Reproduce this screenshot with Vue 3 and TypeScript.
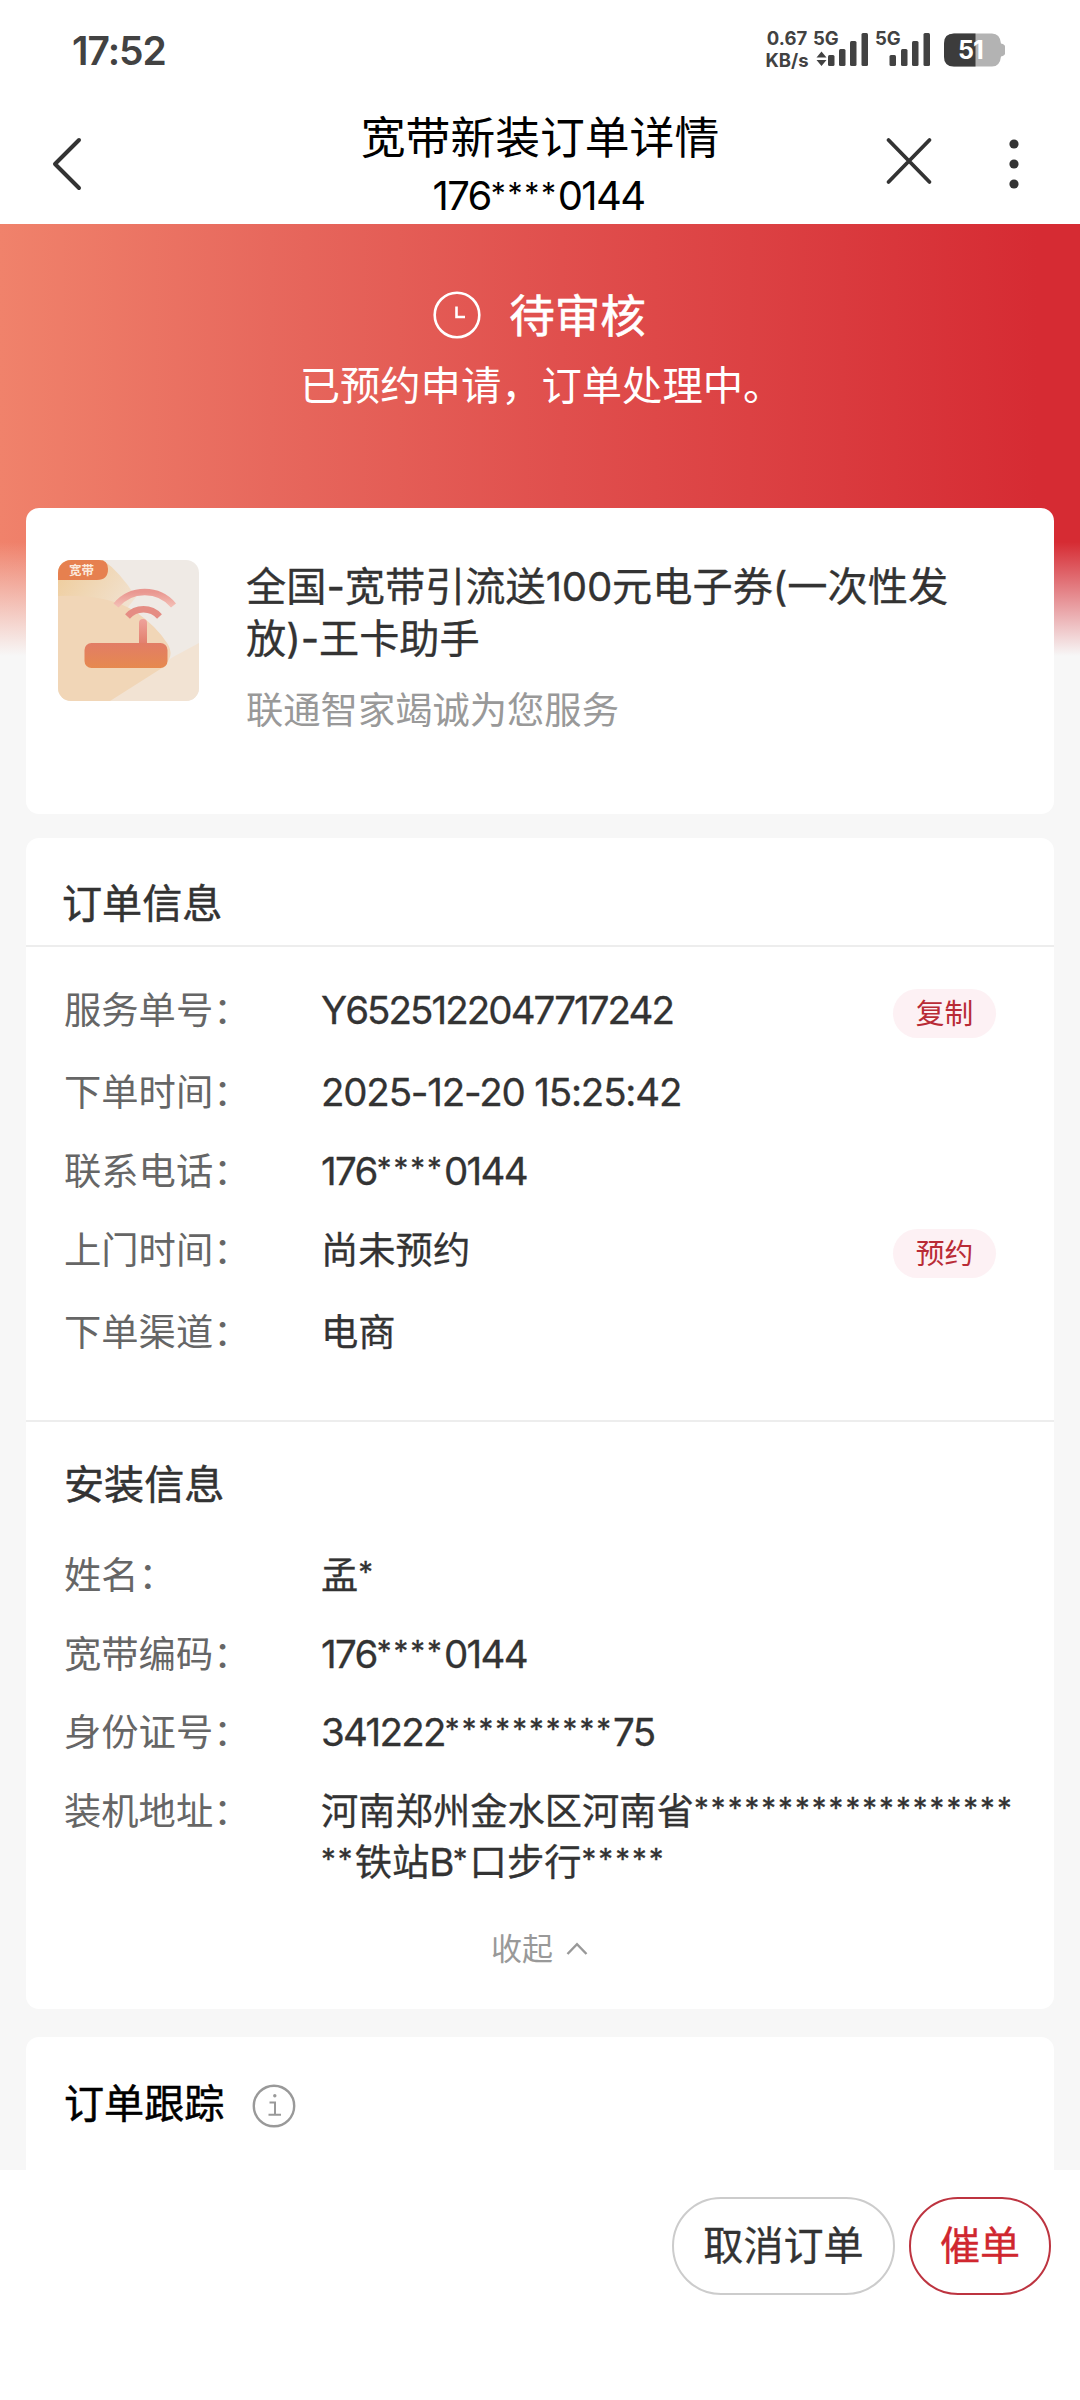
<script setup lang="ts">
interface Segment {
  text: string
  kind: 'latin' | 'stars' | 'han'
}

interface Row {
  label: string
  lines: string[]
  height: number
  tracking?: number
  action?: string
}

// Latin runs, masking asterisks and Chinese runs each get their own size.
function segments(text: string): Segment[] {
  const parts = text.match(/\*+|[\x20-\x29\x2b-\x7e]+|[^\x20-\x7e]+/g) ?? []
  return parts.map((part) => ({
    text: part,
    kind: part.startsWith('*') ? 'stars' : /^[\x20-\x7e]/.test(part) ? 'latin' : 'han',
  }))
}

const stars = (count: number): string => '*'.repeat(count)

const phone = '176****0144'

const orderRows: Row[] = [
  { label: '服务单号：', lines: ['Y6525122047717242'], height: 82, tracking: -1.95, action: '复制' },
  { label: '下单时间：', lines: ['2025-12-20 15:25:42'], height: 79, tracking: -1.2 },
  { label: '联系电话：', lines: [phone], height: 79 },
  { label: '上门时间：', lines: ['尚未预约'], height: 82, action: '预约' },
  { label: '下单渠道：', lines: ['电商'], height: 85 },
]

const installRows: Row[] = [
  { label: '姓名：', lines: ['孟*'], height: 79 },
  { label: '宽带编码：', lines: [phone], height: 78 },
  { label: '身份证号：', lines: [`341222${stars(10)}75`], height: 79 },
  { label: '装机地址：', lines: [`河南郑州金水区河南省${stars(19)}`, `**铁站B*口步行${stars(5)}`], height: 141 },
]

const productTitle = ['全国-宽带引流送100元电子券(一次性发', '放)-王卡助手']
</script>

<template>
  <div class="page">
    <div class="status-bar">
      <span class="clock">17:52</span>
      <div class="indicators">
        <div class="speed"><span>0.67</span><span>KB/s</span></div>
        <svg class="signals" width="118" height="46" viewBox="813 23 118 46">
          <g fill="#424242">
            <text x="813" y="45" class="net">5G</text>
            <path d="M821.5 51.5l5 6h-10zM821.5 66l5-6h-10z" />
            <rect x="828" y="55" width="6.5" height="11" rx="1.5" />
            <rect x="839" y="49" width="6.5" height="17" rx="1.5" />
            <rect x="850" y="41" width="6.5" height="25" rx="1.5" />
            <rect x="861.5" y="33" width="6.5" height="33" rx="1.5" />
            <text x="875" y="45" class="net">5G</text>
            <rect x="889.5" y="55" width="6.5" height="11" rx="1.5" />
            <rect x="901" y="49" width="6.5" height="17" rx="1.5" />
            <rect x="912" y="41" width="6.5" height="25" rx="1.5" />
            <rect x="923.5" y="33" width="6.5" height="33" rx="1.5" />
          </g>
        </svg>
        <svg class="battery" width="62" height="34" viewBox="0 0 62 34">
          <path d="M10 0.5h38q8 0 9 10q4 1 4 3v7q0 2-4 3q-1 10-9 10H10q-10 0-10-10v-13q0-10 10-10z" fill="#b3b3b3" />
          <path d="M10 0.5h21.500v33H10q-10 0-10-10v-13q0-10 10-10z" fill="#3c3c3c" />
          <text x="14" y="26" class="level">51</text>
        </svg>
      </div>
    </div>

    <header class="nav">
      <svg class="nav-back" width="34" height="58" viewBox="0 0 34 58" fill="none" stroke="#333" stroke-width="4" stroke-linecap="round" stroke-linejoin="round">
        <path d="M29 5L5 29L29 53" />
      </svg>
      <div class="nav-title">
        <h1>宽带新装订单详情</h1>
        <p><span v-for="(s, i) in segments(phone)" :key="i" :class="s.kind">{{ s.text }}</span></p>
      </div>
      <div class="nav-actions">
        <svg width="48" height="48" viewBox="0 0 48 48" fill="none" stroke="#333" stroke-width="3.800" stroke-linecap="round">
          <path d="M3.500 3L44.500 45M44.500 3L3.500 45" />
        </svg>
        <svg width="10" height="50" viewBox="0 0 10 50" fill="#333">
          <circle cx="5" cy="5" r="4.600" />
          <circle cx="5" cy="25" r="4.600" />
          <circle cx="5" cy="45" r="4.600" />
        </svg>
      </div>
    </header>

    <main class="content">
      <section class="hero">
        <div class="hero-state">
          <svg width="48" height="48" viewBox="0 0 48 48" fill="none" stroke="#fff" stroke-width="2.600">
            <circle cx="24" cy="24" r="22.300" />
            <path d="M23.500 15.500v10.500h8.500" />
          </svg>
          <h2>待审核</h2>
        </div>
        <p>已预约申请，订单处理中。</p>
      </section>

      <section class="card product">
        <svg class="product-image" width="141" height="141" viewBox="0 0 141 141">
          <defs>
            <clipPath id="tile"><rect width="141" height="141" rx="13" /></clipPath>
            <linearGradient id="base" x1="0" y1="0" x2="0" y2="1">
              <stop offset="0" stop-color="#e27d66" /><stop offset="1" stop-color="#e6894f" />
            </linearGradient>
            <linearGradient id="mast" x1="0" y1="0" x2="0" y2="1">
              <stop offset="0" stop-color="#eea29b" /><stop offset="1" stop-color="#e27f6c" />
            </linearGradient>
            <linearGradient id="wave" x1="0" y1="0" x2="0" y2="1">
              <stop offset="0" stop-color="#e99790" /><stop offset="1" stop-color="#f3bcb3" />
            </linearGradient>
            <linearGradient id="glow" x1="0" y1="0" x2="1" y2="0.600">
              <stop offset="0" stop-color="#efcb98" /><stop offset="1" stop-color="#f1e2d0" />
            </linearGradient>
          </defs>
          <g clip-path="url(#tile)">
            <rect width="141" height="141" fill="#efeae5" />
            <path d="M0 0H45Q62 12 78 37L60 60H0z" fill="url(#glow)" />
            <path d="M115 97L141 83V141H50z" fill="#f2e3d3" />
            <path d="M0 36Q50 34 78 52Q98 66 109 83Q118 96 104 108L52 141H0z" fill="#f1d6b7" />
            <path d="M0 0H41Q50 0 50 9Q50 20 39 20H0z" fill="#e6804f" />
            <text x="11" y="14.500" class="tile-tag">宽带</text>
            <path d="M58 45.500A37.500 37.500 0 0 1 115.500 45.500" fill="none" stroke="url(#wave)" stroke-width="6.500" />
            <path d="M69.500 56.500A21.500 21.500 0 0 1 101.500 56.500" fill="none" stroke="#e58d84" stroke-width="6.500" />
            <path d="M81 84V63Q81 59 85 59Q89 59 89 63V84z" fill="url(#mast)" />
            <rect x="26.500" y="83" width="83" height="25" rx="7" fill="url(#base)" />
          </g>
        </svg>
        <div class="product-text">
          <h3>
            <span v-for="line in productTitle" :key="line" class="line"><span v-for="(s, i) in segments(line)" :key="i" :class="s.kind">{{ s.text }}</span></span>
          </h3>
          <p>联通智家竭诚为您服务</p>
        </div>
      </section>

      <section class="card details">
        <div class="card-head"><h3>订单信息</h3></div>
        <div class="rows order-rows">
          <div v-for="row in orderRows" :key="row.label" class="row" :style="{ height: row.height + 'px' }">
            <span class="label">{{ row.label }}</span>
            <span class="value" :style="{ letterSpacing: (row.tracking ?? -1.7) + 'px' }">
              <span v-for="line in row.lines" :key="line" class="line"><span v-for="(s, i) in segments(line)" :key="i" :class="s.kind">{{ s.text }}</span></span>
            </span>
            <button v-if="row.action" class="pill">{{ row.action }}</button>
          </div>
        </div>
        <div class="install">
          <h3>安装信息</h3>
          <div class="rows">
            <div v-for="row in installRows" :key="row.label" class="row" :style="{ height: row.height + 'px' }">
              <span class="label">{{ row.label }}</span>
              <span class="value" :style="{ letterSpacing: (row.tracking ?? -1.7) + 'px' }">
                <span v-for="line in row.lines" :key="line" class="line"><span v-for="(s, i) in segments(line)" :key="i" :class="s.kind">{{ s.text }}</span></span>
              </span>
            </div>
          </div>
          <div class="collapse">
            <span>收起</span>
            <svg width="22" height="14" viewBox="0 0 22 14" fill="none" stroke="#999" stroke-width="2.400"><path d="M1.500 12L11 2.200L20.500 12" /></svg>
          </div>
        </div>
      </section>

      <section class="card tracking">
        <h3>订单跟踪</h3>
        <svg width="44" height="44" viewBox="0 0 44 44" fill="none" stroke="#999" stroke-width="2.400">
          <circle cx="22" cy="22" r="20.200" />
          <path d="M17.500 18.500h5.500v12M16.500 30.800h12.500" stroke-width="2" />
          <circle cx="22.800" cy="11.800" r="1.700" fill="#999" stroke="none" />
        </svg>
      </section>
    </main>

    <footer class="actions">
      <button class="btn">取消订单</button>
      <button class="btn primary">催单</button>
    </footer>
  </div>
</template>

<style>
body {
  margin: 0;
  background: #fff;
}
</style>

<style scoped>
.page {
  width: 1080px;
  height: 2400px;
  display: flex;
  flex-direction: column;
  overflow: hidden;
  background: #fff;
  color: #333;
  font-family: 'Noto Sans CJK SC', 'Noto Sans', sans-serif;
}

h1,
h2,
h3,
p {
  margin: 0;
  font-weight: 400;
}

button {
  font-family: inherit;
  padding: 0;
  box-sizing: border-box;
}

.latin,
.stars {
  font-family: Inter, sans-serif;
  line-height: 0;
}

.han {
  letter-spacing: 0;
}

.line {
  display: block;
  white-space: pre;
}

.status-bar {
  height: 100px;
  flex: none;
  display: flex;
  justify-content: space-between;
  box-sizing: border-box;
  padding: 0 74px 0 72px;
  color: #424242;
}

.clock {
  font: 600 39px/101px Inter, sans-serif;
  letter-spacing: -1px;
}

.indicators {
  display: flex;
  align-items: flex-start;
}

.speed {
  display: flex;
  flex-direction: column;
  align-items: center;
  width: 46px;
  margin: 27px 3px 0 0;
  font: 700 18.500px/22px Inter, sans-serif;
}

.signals {
  margin-top: 23px;
  overflow: visible;
}

.net {
  font: 700 18.500px Inter, sans-serif;
}

.battery {
  margin: 33px 0 0 13px;
}

.level {
  font: 700 25px Inter, sans-serif;
  letter-spacing: -1px;
  fill: #fff;
}

.nav {
  height: 124px;
  flex: none;
  display: grid;
  grid-template-columns: 300px 480px 300px;
}

.nav-back {
  margin: 35px 0 0 50px;
}

.nav-title {
  text-align: center;
  color: #000;
}

.nav-title h1 {
  font-size: 44.800px;
  line-height: 70px;
}

.nav-title p {
  font-size: 40px;
  line-height: 46px;
  letter-spacing: -1.600px;
  padding-right: 3px;
}

.nav-title .stars {
  font-size: 30px;
  letter-spacing: 1.700px;
  vertical-align: 6px;
}

.nav-actions {
  display: flex;
  justify-content: flex-end;
  gap: 76px;
  padding: 37px 61px 0 0;
}

.nav-actions svg:last-child {
  margin-top: 2px;
}

.content {
  height: 1946px;
  flex: none;
  overflow: hidden;
  display: flex;
  flex-direction: column;
  padding: 0 26px;
  background:
    linear-gradient(to bottom, rgba(247, 247, 247, 0) 318px, #f7f7f7 432px),
    linear-gradient(to right, #f0826b 0%, #e7685d 25%, #e04f4d 52%, #da3a3e 78%, #d62b33 96%);
}

.hero {
  height: 284px;
  flex: none;
  color: #fff;
  display: flex;
  flex-direction: column;
  align-items: center;
}

.hero-state {
  display: flex;
  align-items: center;
  gap: 28px;
  height: 66px;
  margin-top: 58px;
  padding-right: 1px;
}

.hero-state h2 {
  font-size: 45.500px;
  line-height: 60px;
  padding-bottom: 4px;
  -webkit-text-stroke: 0.6px currentColor;
}

.hero p {
  font-size: 40.300px;
  line-height: 70px;
  padding-left: 3px;
}

.card {
  flex: none;
  background: #fff;
  border-radius: 13px;
}

.product {
  height: 306px;
  display: flex;
  padding-left: 32px;
  box-sizing: border-box;
}

.product-image {
  margin-top: 52px;
}

.tile-tag {
  font-size: 12.500px;
  font-weight: 700;
  fill: #fbe9dc;
}

.product-text {
  margin: 50px 0 0 47px;
}

.product-text h3 {
  font-size: 40.200px;
  line-height: 52px;
  -webkit-text-stroke: 0.3px currentColor;
}

.product-text h3 .latin {
  letter-spacing: -0.200px;
}

.product-text p {
  font-size: 37.300px;
  line-height: 60px;
  margin-top: 16px;
  color: #999;
}

.details {
  height: 1171px;
  margin-top: 24px;
}

.card-head {
  height: 107px;
  border-bottom: 2px solid #ededed;
  padding-left: 36px;
}

.card-head h3,
.install h3,
.tracking h3 {
  font-size: 40.100px;
  line-height: 60px;
  -webkit-text-stroke: 0.5px currentColor;
}

.card-head h3 {
  padding-top: 33px;
}

.rows {
  padding-left: 38px;
}

.order-rows {
  height: 473px;
  box-sizing: border-box;
  padding-top: 36px;
}

.row {
  display: grid;
  grid-template-columns: 257px 572px 103px;
  align-items: start;
  font-size: 37.300px;
  line-height: 51px;
}

.label {
  color: #666;
}

.value {
  white-space: nowrap;
  -webkit-text-stroke: 0.3px currentColor;
}

.value .latin {
  font-size: 38.500px;
}

.value .stars {
  font-size: 29.500px;
  letter-spacing: 2.050px;
  vertical-align: 6px;
}

.pill {
  height: 49px;
  margin-top: 6px;
  border: 0;
  padding-bottom: 4px;
  border-radius: 25px;
  background: #fdf1f4;
  color: #b92b36;
  font-size: 28.800px;
  line-height: 44px;
}

.install {
  border-top: 2px solid #ededed;
}

.install h3 {
  padding: 30px 0 0 38px;
}

.install .rows {
  padding-top: 36px;
}

.collapse {
  display: flex;
  justify-content: center;
  align-items: center;
  gap: 13px;
  padding-right: 1px;
  color: #999;
  font-size: 31px;
  line-height: 44px;
}

.collapse svg {
  margin-top: 3px;
}

.tracking {
  height: 160px;
  margin-top: 28px;
  display: flex;
  gap: 28px;
  padding: 34px 0 0 38px;
}

.tracking h3 {
  color: #000;
}

.tracking svg {
  margin-top: 13px;
}

.actions {
  height: 230px;
  flex: none;
  display: flex;
  justify-content: flex-end;
  gap: 14px;
  box-sizing: border-box;
  padding: 27px 29px 0 0;
}

.btn {
  width: 223px;
  height: 98px;
  border: 2px solid #ccc;
  border-radius: 49px;
  padding-bottom: 7px;
  background: #fff;
  color: #333;
  font-size: 40.100px;
  line-height: 84px;
  -webkit-text-stroke: 0.3px currentColor;
}

.btn.primary {
  width: 142px;
  border-color: #bd3440;
  color: #d0272f;
}
</style>
